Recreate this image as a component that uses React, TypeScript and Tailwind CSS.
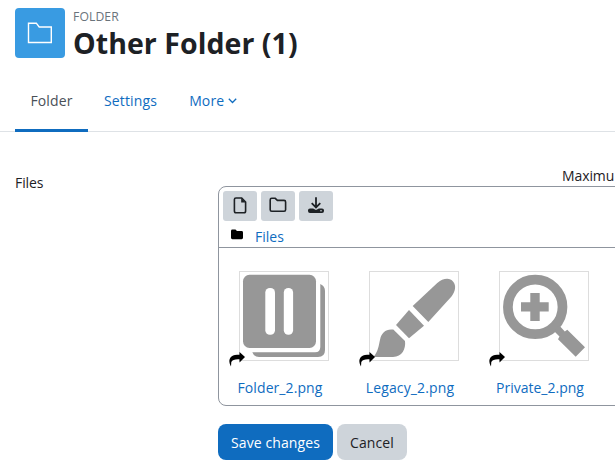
import type { ReactNode } from "react";

const FILES = [
  { name: "Folder_2.png", thumb: <PagesThumb />, fit: "tracking-[0.08px]" },
  { name: "Legacy_2.png", thumb: <BrushThumb />, fit: "tracking-[0.15px]" },
  { name: "Private_2.png", thumb: <ZoomThumb />, fit: "tracking-[0px]" },
];

export default function App() {
  return (
    <div className="h-[473px] w-full overflow-hidden bg-white font-['Open_Sans','Noto_Sans',sans-serif] text-[14px] leading-[22px] text-[#1d2125]">
      <header className="flex gap-2 pl-[15px] pt-2">
        <div className="flex size-[50px] items-center justify-center rounded bg-[#399be2] text-white">
          <svg width="26" height="22" viewBox="0 0 26 22" fill="none" stroke="currentColor" strokeWidth="1.4">
            <path d="M1.5 1.2H9.3L12.2 5H24.3V20.5H1.5Z" />
          </svg>
        </div>
        <div>
          <p className="text-[12.2px] leading-[17px] tracking-[0.1px] text-[#6a737b]">FOLDER</p>
          <h1 className="whitespace-nowrap text-[28.5px] font-bold leading-[36px] tracking-[0.05px]">Other Folder (1)</h1>
        </div>
      </header>

      <nav className="mt-[10px] flex h-[61px] border-b border-[#dee2e6] pl-[15px] text-[#0f6cbf]">
        <Tab active>Folder</Tab>
        <Tab>Settings</Tab>
        <Tab>
          More
          <svg className="ml-1" width="9" height="6" viewBox="0 0 9 6" fill="none" stroke="currentColor" strokeWidth="1.3">
            <path d="M0.8 0.8L4.5 4.5L8.2 0.8" />
          </svg>
        </Tab>
      </nav>

      <main className="flex pl-[15px] pt-[32px]">
        <p className="w-[203px] shrink-0 pt-[8px] tracking-[-0.1px]">Files</p>
        <div className="w-[600px] shrink-0">
          <p className="h-[22px] whitespace-nowrap pl-[344px] leading-[24px] tracking-[-0.1px]">Maximu</p>
          <FileManager />
          <div className="mt-[18px] flex gap-1">
            <button className="h-9 w-[115px] rounded-lg bg-[#0f6cbf] pt-px tracking-[0.1px] text-white">Save changes</button>
            <button className="h-9 w-[70px] rounded-lg bg-[#ced4da] pt-px tracking-[0.1px]">Cancel</button>
          </div>
        </div>
      </main>
    </div>
  );
}

function Tab({ active = false, children }: { active?: boolean; children: ReactNode }) {
  return (
    <a
      className={
        active
          ? "flex h-[61px] w-[73px] items-center justify-center border-b-[3px] border-[#0f6cbf] pt-[2px] tracking-[0.15px] text-[#495057]"
          : "flex h-[61px] items-center border-b-[3px] border-transparent px-4 pt-[2px] tracking-[0.15px]"
      }
    >
      {children}
    </a>
  );
}

function FileManager() {
  return (
    <section className="h-[220px] rounded-lg border border-[#8f959e]">
      <div className="h-[61px] border-b border-[#8f959e] pl-1 pt-1">
        <div className="flex gap-1">
          <ToolButton>
            <svg width="14" height="17" viewBox="0 0 14 17">
              <path d="M3 1H8.7L12.6 5V14Q12.6 15.8 11 15.8H3Q1.4 15.8 1.4 14V2.6Q1.4 1 3 1Z" fill="none" stroke="currentColor" strokeWidth="1.6" />
              <path d="M8.2 1V5.4H12.6Z" fill="currentColor" />
            </svg>
          </ToolButton>
          <ToolButton>
            <svg width="18" height="16" viewBox="0 0 18 16" fill="none" stroke="currentColor" strokeWidth="1.6">
              <path d="M2.7 1.3H6.2L8.4 3.4H15.1Q16.6 3.4 16.6 5V12.7Q16.6 14.3 15.1 14.3H2.7Q1.2 14.3 1.2 12.7V2.9Q1.2 1.3 2.7 1.3Z" />
            </svg>
          </ToolButton>
          <ToolButton>
            <svg width="16" height="16" viewBox="0 0 16 16">
              <path d="M8 0.3V10M3.7 6.2L8 10.4L12.3 6.2" fill="none" stroke="currentColor" strokeWidth="1.8" />
              <path d="M2 11.5H5.1L8 13L10.9 11.5H14Q16 11.5 16 13.3V14Q16 16 14 16H2Q0 16 0 14V13.3Q0 11.5 2 11.5Z" fill="currentColor" />
              <circle cx="13" cy="13.7" r="0.8" fill="#ced4da" />
            </svg>
          </ToolButton>
        </div>
        <div className="mt-[5px] flex text-[#0f6cbf]">
          <svg className="ml-2 mt-[3px]" width="12" height="11" viewBox="0 0 12 11" fill="#000">
            <path d="M1.4 0.5H4.5L6 2H10.6Q12 2 12 3.4V8.8Q12 10.2 10.6 10.2H1.4Q0 10.2 0 8.8V1.9Q0 0.5 1.4 0.5Z" />
          </svg>
          <a className="ml-3">Files</a>
        </div>
      </div>
      <div className="flex gap-[18px] pl-[9px] pt-[23px]">
        {FILES.map((file) => (
          <figure key={file.name} className="relative w-28 text-center">
            <div className="mx-auto size-[90px] border border-[#dddddd]">{file.thumb}</div>
            <AliasArrow />
            <figcaption className={`mr-2 mt-[16px] whitespace-nowrap text-[#0f6cbf] ${file.fit}`}>{file.name}</figcaption>
          </figure>
        ))}
      </div>
    </section>
  );
}

function ToolButton({ children }: { children: ReactNode }) {
  return <button className="flex h-[30px] w-[34px] items-center justify-center rounded-[3px] bg-[#ced4da] pb-[2px]">{children}</button>;
}

// marks a file that is a link to another one
function AliasArrow() {
  return (
    <svg className="absolute left-px top-[81px]" width="16" height="15" viewBox="0 0 16 15">
      <path d="M10.5 0L16 5L10.5 10.5V7.3C6 7 3.3 8 2.3 10L2 14.5C0 11 -0.6 7 2.5 4.4C4.5 2.8 7 2.7 10.5 2.7Z" />
    </svg>
  );
}

function PagesThumb() {
  return (
    <svg width="88" height="88" viewBox="1 1 88 88" fill="#979797">
      <rect x="4" y="3.8" width="73" height="73.2" rx="6.5" />
      <rect x="26.3" y="17" width="9.7" height="46.7" rx="4.5" fill="#fff" />
      <rect x="44.8" y="17" width="9.3" height="46.7" rx="4.5" fill="#fff" />
      <path d="M81.3 13Q86 15 86 20V79Q86 86 79 86H20Q15 86 13.3 81.3H76Q81.3 81.3 81.3 76Z" />
    </svg>
  );
}

function BrushThumb() {
  return (
    <svg width="88" height="88" viewBox="1 1 88 88" fill="#979797">
      <path d="M43.7 35L68 12.2C74 7 81 6.5 84 10.5C87.5 14.5 86.5 20 82.5 25.5L59.3 51Z" />
      <path d="M40 39L55 54.7L40 67.3L27 54Z" />
      <path d="M24.3 58.6L36 70C37 78 33 85.9 24 85.9H4.5C9.5 80 9.5 75 11.2 68C12.5 62 17 57.5 24.3 58.6Z" />
    </svg>
  );
}

function ZoomThumb() {
  return (
    <svg width="88" height="88" viewBox="1 1 88 88" fill="#979797">
      <circle cx="36.2" cy="35.9" r="27.3" fill="none" stroke="#979797" strokeWidth="9.7" />
      <path d="M31.3 22H40.7V31.2H49.7V40.5H40.7V50H31.3V40.5H22V31.2H31.3Z" />
      <path d="M55 60L60.3 54.5L65.8 60.5L68.3 58.7L86 76.3L76.7 85.7L59 68.3L60.5 65.5Z" />
    </svg>
  );
}
